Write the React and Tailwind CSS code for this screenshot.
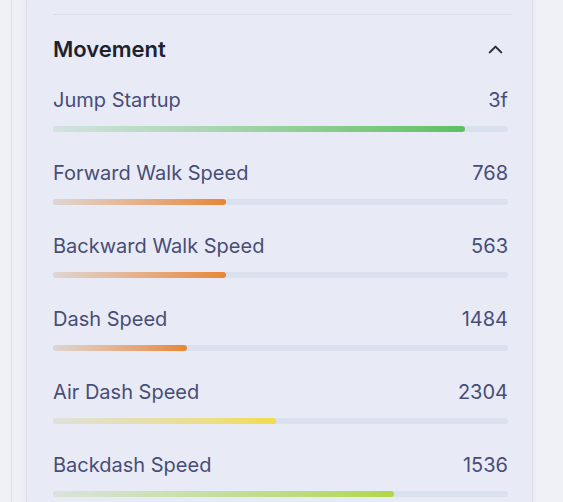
import { ChevronUp } from "lucide-react";

const stats = [
  { label: "Jump Startup", value: "3f", pct: 90.5, color: "from-[#d3e2e0] to-[#5dc060]" },
  { label: "Forward Walk Speed", value: "768", pct: 38, color: "from-[#ddd6d2] to-[#e8862e]" },
  { label: "Backward Walk Speed", value: "563", pct: 38, color: "from-[#ddd6d2] to-[#e8862e]" },
  { label: "Dash Speed", value: "1484", pct: 29.5, color: "from-[#ddd6d2] to-[#e8862e]" },
  { label: "Air Dash Speed", value: "2304", pct: 49, color: "from-[#dfe0dc] to-[#f2dc4c]" },
  { label: "Backdash Speed", value: "1536", pct: 75, color: "from-[#d9e3dc] to-[#b0d845]" },
];

export default function App() {
  return (
    <div
      className="flex h-[502px] w-[563px] overflow-hidden bg-[#eef0f6]"
      style={{ fontFamily: "Inter, 'Noto Sans', sans-serif" }}
    >
      <div className="w-[12px] shrink-0 border-r border-[#dcdfe8]" />
      <div className="ml-[14px] w-[507px] shrink-0 border-x border-[#dde0ea] bg-[#e8ebf5] pl-[26px] pr-[24px] pt-[14px] shadow-[0_0_6px_rgba(0,0,0,0.05)]">
        <div className="-mr-[4px] h-px bg-[#dadeea]" />
        <div className="mt-[20px] flex h-[28px] items-center justify-between">
          <h2 className="text-[22px] font-semibold text-[#1e2230]">Movement</h2>
          <ChevronUp className="mr-[1px] h-[23px] w-[23px] text-[#2a2d3a]" strokeWidth={2.2} />
        </div>
        <div className="mt-[25px]">
          {stats.map((s) => (
            <div key={s.label} className="mb-[29px]">
              <div className="flex h-[24px] items-center justify-between text-[20px] text-[#484d78]">
                <span>{s.label}</span>
                <span>{s.value}</span>
              </div>
              <div className="mt-[14px] h-[6px] rounded-full bg-[#d9e0ee]">
                <div
                  className={`h-full rounded-full bg-gradient-to-r ${s.color}`}
                  style={{ width: `${s.pct}%` }}
                />
              </div>
            </div>
          ))}
        </div>
      </div>
    </div>
  );
}
